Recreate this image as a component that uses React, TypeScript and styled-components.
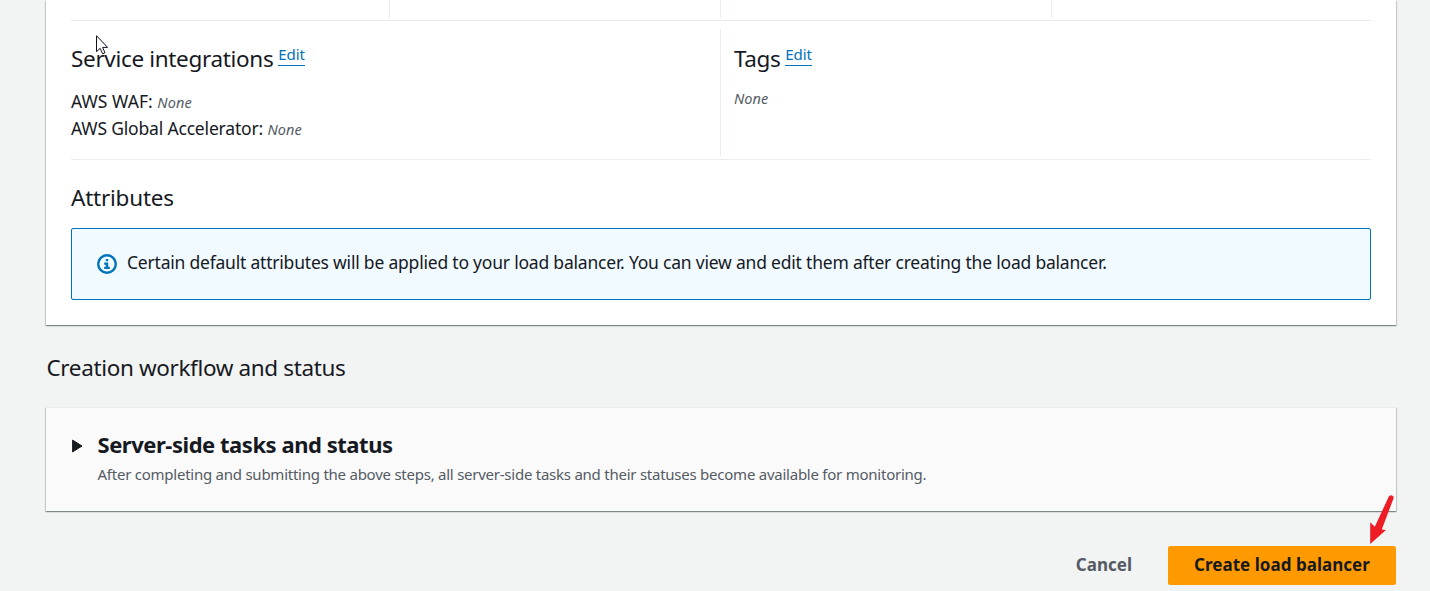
import React from "react";
import styled, { createGlobalStyle } from "styled-components";

const GlobalStyle = createGlobalStyle`
  * { box-sizing: border-box; }
  body {
    margin: 0;
    background: #f2f3f3;
    color: #16191f;
    font-family: "Noto Sans", "Open Sans", sans-serif;
    overflow: hidden;
  }
  h2, h3, p { margin: 0; font-weight: 400; }
`;

const Page = styled.main`
  position: relative;
  width: 1430px;
  height: 591px;
  padding: 0 34px 0 46px;
  overflow: hidden;
`;

const Card = styled.section<{ $muted?: boolean }>`
  background: ${(p) => (p.$muted ? "#fafafa" : "#fff")};
  border-top: ${(p) => (p.$muted ? "1px solid #eaeded" : "0")};
  height: ${(p) => (p.$muted ? 104 : 325)}px;
  padding: ${(p) => (p.$muted ? "22px 25px 0" : "0 25px")};
  box-shadow: 0 1px 1px 0 rgba(0, 28, 36, 0.3),
    1px 1px 1px 0 rgba(0, 28, 36, 0.15), -1px 1px 1px 0 rgba(0, 28, 36, 0.15);
`;

const SummaryRow = styled.div`
  display: grid;
  grid-template-columns: 318px 331px 331px 1fr;
  height: 21px;
  padding-bottom: 2px;
  border-bottom: 1px solid #eaeded;
`;

const SummaryCell = styled.div`
  & + & { border-left: 1px solid #eaeded; }
`;

const DetailRow = styled.div`
  display: grid;
  grid-template-columns: 649px 1fr;
  height: 139px;
  padding: 8px 0 3px;
  border-bottom: 1px solid #eaeded;
`;

const DetailCell = styled.div<{ $divided?: boolean }>`
  padding-top: 16px;
  padding-left: ${(p) => (p.$divided ? 13 : 0)}px;
  border-left: ${(p) => (p.$divided ? "1px solid #eaeded" : "0")};
`;

const TitleLine = styled.div`
  display: flex;
  align-items: flex-start;
  height: 28px;
`;

const Title = styled.h2<{ $track: number }>`
  font-size: 22.5px;
  line-height: 28px;
  letter-spacing: ${(p) => p.$track}px;
  white-space: nowrap;
`;

const EditLink = styled.a`
  height: 21px;
  margin-left: 5px;
  border-bottom: 1px solid #0073bb;
  color: #0073bb;
  font-size: 15px;
  line-height: 18px;
  letter-spacing: -0.1px;
`;

const Properties = styled.div`
  padding-top: 15px;
`;

const Property = styled.p<{ $track: number }>`
  font-size: 17.5px;
  line-height: 27px;
  letter-spacing: ${(p) => p.$track}px;
  white-space: nowrap;
`;

const Empty = styled.em`
  color: #545b64;
  font-size: 14.5px;
  line-height: 20px;
  letter-spacing: 0.1px;
`;

const EmptyLine = styled.p`
  padding-top: 15px;
  font-size: 14.5px;
  line-height: 20px;
`;

const Attributes = styled.div`
  padding-top: 24px;
`;

const Alert = styled.div`
  display: flex;
  align-items: center;
  height: 72px;
  margin-top: 16px;
  padding: 0 25px;
  border: 1px solid #0073bb;
  border-radius: 2px;
  background: #f1faff;
`;

const AlertText = styled.p`
  margin: 0 0 4px 10px;
  font-size: 17.5px;
  line-height: 28px;
  letter-spacing: -0.21px;
  white-space: nowrap;
`;

const WorkflowHeading = styled.div`
  height: 82px;
  padding: 29px 0 0 0.5px;
`;

const Expander = styled.div`
  display: flex;
  align-items: flex-start;
`;

const Caret = styled.svg`
  flex: none;
  margin: 9px 14.5px 0 1px;
`;

const ExpanderTitle = styled.h3`
  font-size: 22px;
  font-weight: 700;
  line-height: 29px;
  letter-spacing: -0.46px;
  white-space: nowrap;
`;

const ExpanderNote = styled.p`
  color: #545b64;
  font-size: 15px;
  line-height: 20px;
  margin-top: 5px;
  letter-spacing: -0.245px;
  white-space: nowrap;
`;

const Actions = styled.div`
  display: flex;
  justify-content: flex-end;
  align-items: center;
  margin-top: 35px;
`;

const Button = styled.button<{ $primary?: boolean }>`
  width: ${(p) => (p.$primary ? 228 : 110)}px;
  height: 39px;
  margin-left: 9px;
  padding: 0 0 1px;
  border: 0;
  border-radius: 2.5px;
  background: ${(p) => (p.$primary ? "#ff9900" : "transparent")};
  color: ${(p) => (p.$primary ? "#16191f" : "#545b64")};
  font-family: inherit;
  font-size: 17px;
  font-weight: 700;
  line-height: 36px;
  letter-spacing: 0.03px;
  white-space: nowrap;
`;

const Pointer = styled.svg`
  position: absolute;
  left: 96px;
  top: 35px;
`;

const RedArrow = styled.svg`
  position: absolute;
  left: 1366px;
  top: 492px;
`;

export default function App() {
  return (
    <Page>
      <GlobalStyle />
      <Card>
        <SummaryRow>
          <SummaryCell />
          <SummaryCell />
          <SummaryCell />
          <SummaryCell />
        </SummaryRow>
        <DetailRow>
          <DetailCell>
            <TitleLine>
              <Title $track={-0.33}>Service integrations</Title>
              <EditLink>Edit</EditLink>
            </TitleLine>
            <Properties>
              <Property $track={0.04}>
                AWS WAF: <Empty>None</Empty>
              </Property>
              <Property $track={-0.18}>
                AWS Global Accelerator: <Empty>None</Empty>
              </Property>
            </Properties>
          </DetailCell>
          <DetailCell $divided>
            <TitleLine>
              <Title $track={-0.4}>Tags</Title>
              <EditLink>Edit</EditLink>
            </TitleLine>
            <EmptyLine>
              <Empty>None</Empty>
            </EmptyLine>
          </DetailCell>
        </DetailRow>
        <Attributes>
          <Title $track={-0.22}>Attributes</Title>
          <Alert>
            <svg width="20" height="20" viewBox="0 0 20 20" fill="none">
              <circle cx="10" cy="10" r="8.8" stroke="#0073bb" strokeWidth="2.4" />
              <path
                d="M8.8 5h2.4v2.2H8.8zM7.2 8.5h4v4.3h1.6V15H7.2v-2.2h1.6v-2.1H7.2z"
                fill="#0073bb"
              />
            </svg>
            <AlertText>
              Certain default attributes will be applied to your load balancer. You can view and
              edit them after creating the load balancer.
            </AlertText>
          </Alert>
        </Attributes>
      </Card>
      <WorkflowHeading>
        <Title $track={-0.36}>Creation workflow and status</Title>
      </WorkflowHeading>
      <Card $muted>
        <Expander>
          <Caret width="11" height="14" viewBox="0 0 11 14">
            <path d="M.6 1.1 10 7 .6 12.9z" fill="#16191f" stroke="#16191f" strokeLinejoin="round" />
          </Caret>
          <div>
            <ExpanderTitle>Server-side tasks and status</ExpanderTitle>
            <ExpanderNote>
              After completing and submitting the above steps, all server-side tasks and their
              statuses become available for monitoring.
            </ExpanderNote>
          </div>
        </Expander>
      </Card>
      <Actions>
        <Button>Cancel</Button>
        <Button $primary>Create load balancer</Button>
      </Actions>
      <Pointer width="13" height="20" viewBox="0 0 13 20">
        <path
          d="M.5.7v16l3.6-3.4 2.6 5.5 2.3-1-2.4-5.4h5z"
          fill="#fff"
          stroke="#16101f"
          strokeWidth="1"
        />
      </Pointer>
      <RedArrow width="30" height="54" viewBox="0 0 30 54">
        <path
          d="M22.7 4.8a2.5 2.5 0 0 1 4.7 1.9L15.8 37.4l4.2.6L4.2 52V30.3l4.6 4.5z"
          fill="#ee1c25"
        />
      </RedArrow>
    </Page>
  );
}
